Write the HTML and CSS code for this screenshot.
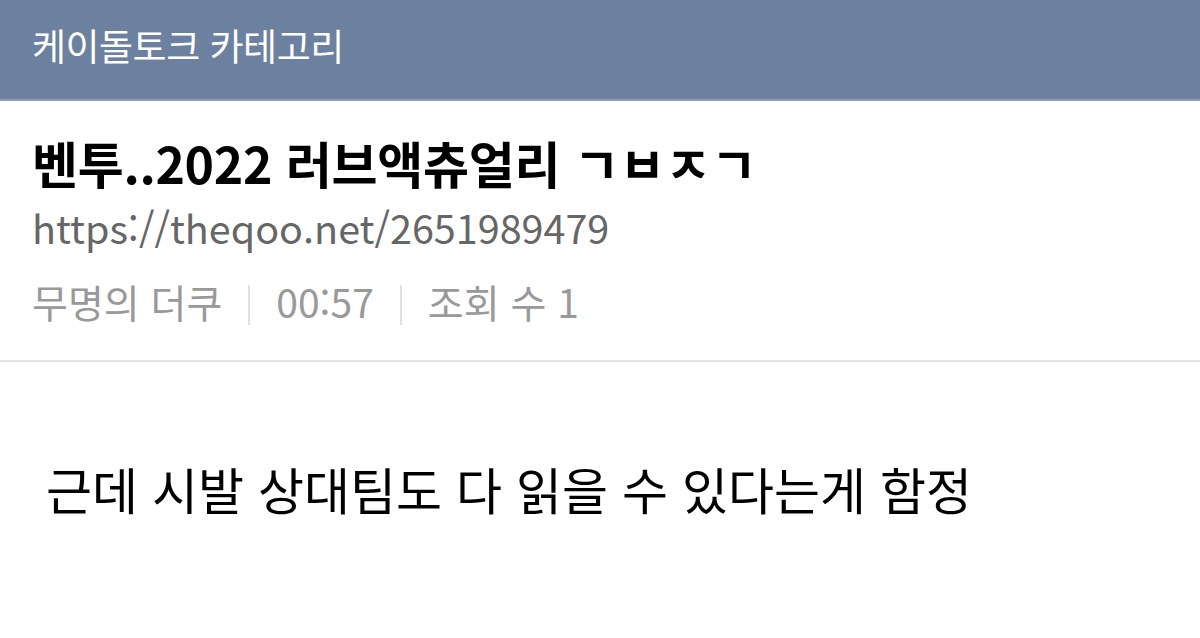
FILE: index.html
```html
<!DOCTYPE html>
<html lang="ko">
<head>
<meta charset="utf-8">
<link rel="stylesheet" href="styles.css">
</head>
<body>
<header class="topbar">케이돌토크 카테고리</header>
<section class="post-head">
  <h1 class="title">벤투..2022 러브액츄얼리 ㄱㅂㅈㄱ</h1>
  <div class="url">https://theqoo.net/2651989479</div>
  <div class="meta"><span>무명의 더쿠</span><i class="sep"></i><span>00:57</span><i class="sep"></i><span>조회 수 1</span></div>
</section>
<article class="body">근데 시발 상대팀도 다 읽을 수 있다는게 함정</article>
</body>
</html>
```
FILE: styles.css
```css
html, body { margin: 0; padding: 0; background: #fff; }
body { width: 1200px; height: 638px; overflow: hidden; font-family: "Noto Sans CJK KR", sans-serif; }
.topbar {
  height: 99px;
  background: #6b819f;
  border-bottom: 2px solid #8e9fb6;
  color: #fff;
  font-size: 37px;
  line-height: 90px;
  padding-left: 32px;
  letter-spacing: -0.5px;
}
.post-head {
  padding: 31px 32px 0 32px;
  height: 228px;
  border-bottom: 2px solid #e3e3e3;
}
.title {
  margin: 0;
  font-size: 50px;
  font-weight: 700;
  line-height: 60px;
  color: #000;
  letter-spacing: -0.3px;
}
.url {
  margin-top: 10px;
  font-size: 39.5px;
  line-height: 50px;
  color: #666;
}
.meta {
  margin-top: 24px;
  font-size: 39px;
  line-height: 50px;
  color: #999;
  display: flex;
  align-items: center;
}
.sep {
  display: inline-block;
  width: 2px;
  height: 40px;
  background: #e0e0e0;
  margin: 8px 26px 0 26px;
}
.body {
  padding: 96px 0 0 46px;
  font-size: 50px;
  line-height: 60px;
  color: #000;
}
```
